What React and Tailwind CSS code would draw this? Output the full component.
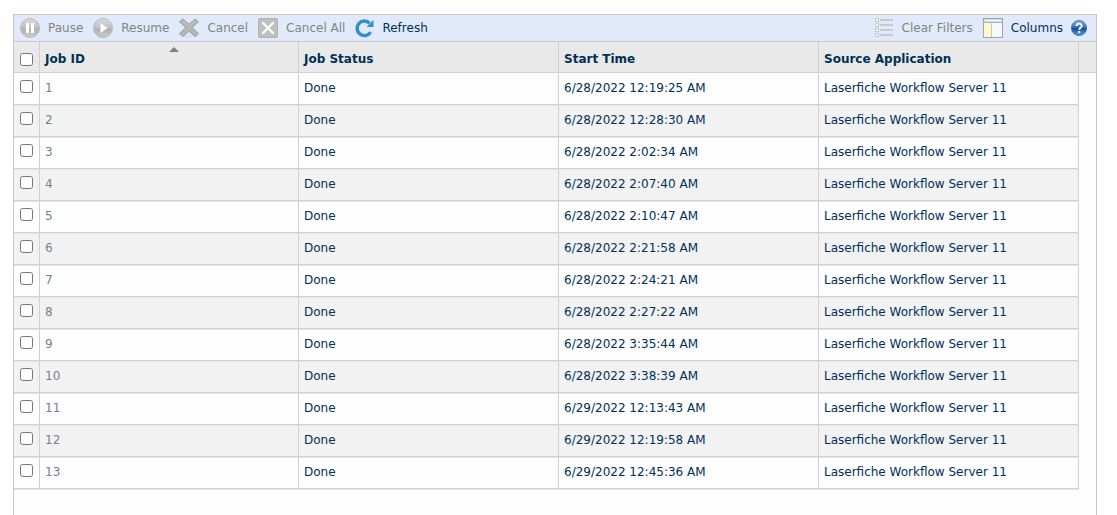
import { useState } from "react";

const columns = ["Job ID", "Job Status", "Start Time", "Source Application"];

const startTimes = [
  "6/28/2022 12:19:25 AM",
  "6/28/2022 12:28:30 AM",
  "6/28/2022 2:02:34 AM",
  "6/28/2022 2:07:40 AM",
  "6/28/2022 2:10:47 AM",
  "6/28/2022 2:21:58 AM",
  "6/28/2022 2:24:21 AM",
  "6/28/2022 2:27:22 AM",
  "6/28/2022 3:35:44 AM",
  "6/28/2022 3:38:39 AM",
  "6/29/2022 12:13:43 AM",
  "6/29/2022 12:19:58 AM",
  "6/29/2022 12:45:36 AM",
];

const jobs = startTimes.map((startTime, index) => ({
  id: index + 1,
  status: "Done",
  startTime,
  source: "Laserfiche Workflow Server 11",
}));

// shared grey gradient of the disabled round icons
function GreyGradient({ id }) {
  return (
    <linearGradient id={id} x1="0" y1="0" x2="0" y2="1">
      <stop offset="0" stopColor="#dadada" />
      <stop offset="0.5" stopColor="#c0c0c0" />
      <stop offset="0.55" stopColor="#b0b0b0" />
      <stop offset="1" stopColor="#cccccc" />
    </linearGradient>
  );
}

function PauseIcon() {
  return (
    <svg className="w-5 h-5" viewBox="0 0 20 20" aria-hidden="true">
      <defs>
        <GreyGradient id="pause-fill" />
      </defs>
      <circle cx="10" cy="10" r="9.5" fill="url(#pause-fill)" stroke="#bababa" />
      <rect x="6" y="5" width="3" height="10" fill="#fff" />
      <rect x="11" y="5" width="3" height="10" fill="#fff" />
    </svg>
  );
}

function ResumeIcon() {
  return (
    <svg className="w-5 h-5" viewBox="0 0 20 20" aria-hidden="true">
      <defs>
        <GreyGradient id="resume-fill" />
      </defs>
      <circle cx="10" cy="10" r="9.5" fill="url(#resume-fill)" stroke="#bababa" />
      <path d="M7.5 5 L14.5 10 L7.5 15 Z" fill="#fff" />
    </svg>
  );
}

function CancelIcon() {
  return (
    <svg className="w-5 h-5" viewBox="0 0 21 20" aria-hidden="true">
      <ellipse cx="10.5" cy="19" rx="7" ry="1" fill="#d5dae2" />
      <path
        d="M4 0.5 L10.5 6 L17 0.5 L20.5 3.5 L14 9.5 L20.5 16 L17 19 L10.5 13.5 L4 19 L0.5 16 L7 9.5 L0.5 3.5 Z"
        fill="#b5b5b5"
        stroke="#9c9c9c"
        strokeLinejoin="round"
      />
      <path d="M4 2.5 L10.5 8 L17 2.5" fill="none" stroke="#c8c8c8" />
    </svg>
  );
}

function CancelAllIcon() {
  return (
    <svg className="w-5 h-5" viewBox="0 0 20 20" aria-hidden="true">
      <rect x="0.5" y="0.5" width="19" height="19" rx="1" fill="#bfbfbf" stroke="#b4b4b4" />
      <path d="M4.5 4.5 L15.5 15.5 M15.5 4.5 L4.5 15.5" stroke="#fff" strokeWidth="2.4" />
    </svg>
  );
}

function RefreshIcon() {
  return (
    <svg className="w-[19px] h-5" viewBox="0 0 19 20" aria-hidden="true">
      <path
        d="M15.6 14.2 A7.3 7.3 0 1 1 14.6 5.2"
        fill="none"
        stroke="#378dcb"
        strokeWidth="3.4"
      />
      <path d="M18.5 2 V9 H11.5 Z" fill="#378dcb" />
    </svg>
  );
}

function FiltersIcon() {
  return (
    <svg className="w-[19px] h-5" viewBox="0 0 19 20" aria-hidden="true">
      {[0, 5, 10, 15].map((y) => (
        <g key={y}>
          <rect x="0.5" y={y + 0.5} width="3" height="3" fill="#fff" stroke="#c9c9c9" />
          <rect x="5" y={y + 1} width="13" height="2" fill="#c9c9c9" />
        </g>
      ))}
    </svg>
  );
}

function ColumnsIcon() {
  return (
    <svg className="w-5 h-5" viewBox="0 0 20 20" aria-hidden="true">
      <rect x="0.5" y="0.5" width="19" height="19" fill="#f7f8f8" stroke="#98a5b0" />
      <rect x="1" y="1" width="18" height="3" fill="#d3dde5" />
      <rect x="2" y="2" width="16" height="1" fill="#f4f7f9" />
      <rect x="1" y="4" width="18" height="1" fill="#a9b4bc" />
      <rect x="1" y="5" width="7" height="14" fill="#fff9cf" />
      <rect x="8" y="5" width="1" height="14" fill="#c3c9ca" />
    </svg>
  );
}

function HelpIcon() {
  return (
    <svg className="w-4 h-4" viewBox="0 0 16 16" aria-hidden="true">
      <defs>
        <linearGradient id="help-fill" x1="0" y1="0" x2="0" y2="1">
          <stop offset="0" stopColor="#8fb0dd" />
          <stop offset="0.48" stopColor="#386ab2" />
          <stop offset="0.52" stopColor="#174b98" />
          <stop offset="1" stopColor="#4fa4e8" />
        </linearGradient>
      </defs>
      <circle cx="8" cy="8" r="7.6" fill="url(#help-fill)" stroke="#3768ab" strokeWidth="0.8" />
      <path
        d="M5.5 6 C5.5 2.8 10.7 2.8 10.7 5.9 C10.7 7.7 8.2 7.7 8.2 9.7"
        fill="none"
        stroke="#fff"
        strokeWidth="1.8"
      />
      <rect x="7.2" y="11" width="2" height="2" fill="#fff" />
    </svg>
  );
}

function ToolButton({ icon, label, disabled }) {
  return (
    <button
      type="button"
      disabled={disabled}
      className="flex items-center gap-2 whitespace-nowrap text-[#003057] disabled:text-[#838383]"
    >
      {icon}
      {label}
    </button>
  );
}

function App() {
  const [selected, setSelected] = useState([]);

  const toggleJob = (id) => {
    setSelected((prev) =>
      prev.includes(id) ? prev.filter((item) => item !== id) : [...prev, id]
    );
  };

  const toggleAll = () => {
    setSelected(selected.length === jobs.length ? [] : jobs.map((job) => job.id));
  };

  return (
    <div className="min-h-screen flex flex-col bg-white pt-3.5 pl-[13px] pr-5 font-['DejaVu_Sans',sans-serif] text-xs text-[#003057]">
      <main className="flex-1 border border-b-0 border-[#c8c8c8] bg-[#fdfdfd]">
        {/* toolbar */}
        <div className="flex items-center justify-between h-[27px] pl-1.5 pr-[9px] bg-[#e1eafa] border-b border-[#c4cad3]">
          <div className="flex items-center gap-2.5">
            <ToolButton icon={<PauseIcon />} label="Pause" disabled />
            <ToolButton icon={<ResumeIcon />} label="Resume" disabled />
            <ToolButton icon={<CancelIcon />} label="Cancel" disabled />
            <ToolButton icon={<CancelAllIcon />} label="Cancel All" disabled />
            <ToolButton icon={<RefreshIcon />} label="Refresh" />
          </div>
          <div className="flex items-center gap-2.5">
            <ToolButton icon={<FiltersIcon />} label="Clear Filters" disabled />
            <div className="flex items-center gap-2">
              <ToolButton icon={<ColumnsIcon />} label="Columns" />
              <button type="button" aria-label="Help">
                <HelpIcon />
              </button>
            </div>
          </div>
        </div>

        {/* job list */}
        <table className="w-full table-fixed border-separate border-spacing-0 text-left">
          <colgroup>
            <col className="w-[26px]" />
            <col className="w-[259px]" />
            <col />
            <col />
            <col />
            <col className="w-[17px]" />
          </colgroup>
          <thead>
            <tr className="h-[31px] bg-[#e9e9e9]">
              <th className="p-0 border-r border-b border-[#d0d0d0]">
                <input
                  type="checkbox"
                  aria-label="Select all jobs"
                  className="block mx-auto mt-1 w-[13px] h-[13px]"
                  checked={selected.length === jobs.length}
                  onChange={toggleAll}
                />
              </th>
              {columns.map((name, index) => (
                <th
                  key={name}
                  aria-sort={index === 0 ? "ascending" : undefined}
                  className="relative px-[5px] pt-1 pb-0 font-bold border-r border-b border-[#d0d0d0]"
                >
                  {name}
                  {index === 0 && (
                    <svg
                      className="absolute top-[5px] left-1/2 w-2.5 h-[5px]"
                      viewBox="0 0 10 5"
                      aria-hidden="true"
                    >
                      <path d="M5 0 L10 5 H0 Z" fill="#808080" />
                    </svg>
                  )}
                </th>
              ))}
              <td className="p-0 border-b border-[#d0d0d0]"></td>
            </tr>
          </thead>
          <tbody>
            {jobs.map((job) => (
              <tr
                key={job.id}
                className="h-8 *:border-b *:border-b-[#d0d0d0] *:border-t *:border-t-[#e6e6e6] first:*:border-t-[#fdfdfd] *:border-r *:border-r-[#d0d0d0] odd:*:bg-[#fdfdfd] even:*:bg-[#f2f2f2]"
              >
                <td className="p-0">
                  <input
                    type="checkbox"
                    aria-label={`Select job ${job.id}`}
                    className="block mx-auto mb-1.5 w-[13px] h-[13px]"
                    checked={selected.includes(job.id)}
                    onChange={() => toggleJob(job.id)}
                  />
                </td>
                <td className="px-[5px] pt-0 pb-0.5 text-[#74808e]">{job.id}</td>
                <td className="px-[5px] pt-0 pb-0.5">{job.status}</td>
                <td className="px-[5px] pt-0 pb-0.5 whitespace-nowrap">{job.startTime}</td>
                <td className="px-[5px] pt-0 pb-0.5 whitespace-nowrap">{job.source}</td>
              </tr>
            ))}
            <tr className="h-px">
              <td colSpan={5} className="p-0 border-t border-[#e6e6e6]"></td>
            </tr>
          </tbody>
        </table>
      </main>
    </div>
  );
}

export default App;
